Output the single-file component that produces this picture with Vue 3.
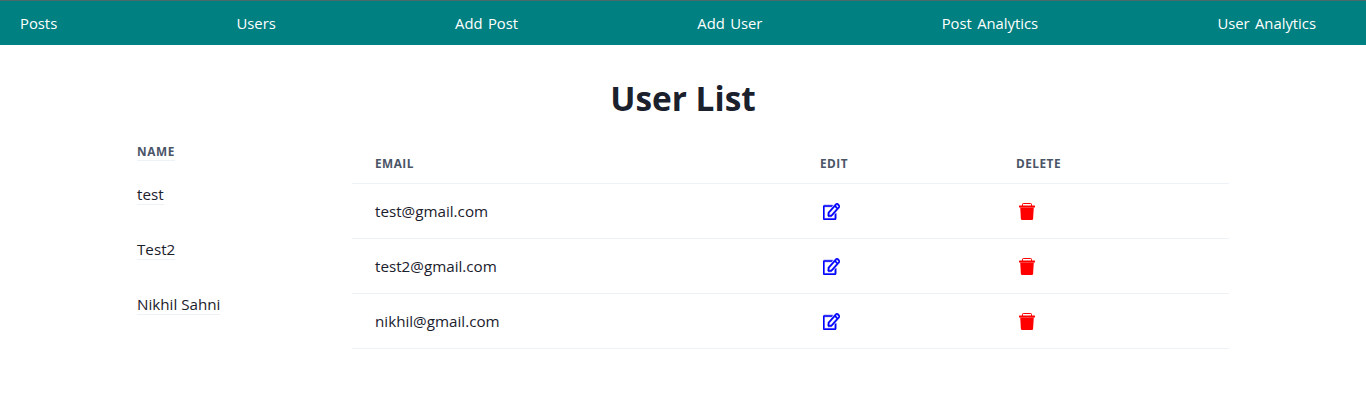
<script setup>
const links = ['Posts', 'Users', 'Add Post', 'Add User', 'Post Analytics', 'User Analytics']
const users = [
  { name: 'test', email: 'test@gmail.com' },
  { name: 'Test2', email: 'test2@gmail.com' },
  { name: 'Nikhil Sahni', email: 'nikhil@gmail.com' }
]
</script>

<template>
  <div class="page">
    <nav class="nav">
      <a v-for="l in links" :key="l" class="link">{{ l }}</a>
    </nav>
    <h1 class="title">User List</h1>
    <div class="board">
      <div class="names">
        <div class="names-head">NAME</div>
        <div v-for="u in users" :key="u.name" class="name">{{ u.name }}</div>
      </div>
      <div class="table">
        <div class="row head">
          <div>EMAIL</div>
          <div>EDIT</div>
          <div>DELETE</div>
        </div>
        <div v-for="u in users" :key="u.email" class="row body">
          <div>{{ u.email }}</div>
          <div class="icon-cell">
            <svg width="17" height="17" viewBox="0 0 576 512" preserveAspectRatio="none" fill="#0000ff" stroke="#0000ff" stroke-width="14"><path d="M402.3 344.9l32-32c5-5 13.7-1.5 13.7 5.7V464c0 26.5-21.5 48-48 48H48c-26.5 0-48-21.5-48-48V112c0-26.5 21.5-48 48-48h273.5c7.1 0 10.7 8.6 5.7 13.7l-32 32c-1.5 1.5-3.5 2.3-5.7 2.3H48v352h352V350.5c0-2.1.8-4.1 2.3-5.6zm156.6-201.8L296.3 405.7l-90.4 10c-26.2 2.9-48.5-19.2-45.6-45.6l10-90.4L432.9 17.1c22.9-22.9 59.9-22.9 82.7 0l43.2 43.2c22.9 22.9 22.9 60 .1 82.8zM460.1 174L402 115.9 216.2 301.8l-7.3 65.3 65.3-7.3L460.1 174zm64.8-79.7l-43.2-43.2c-4.1-4.1-10.8-4.1-14.8 0L436 82l58.1 58.1 30.9-30.9c4-4.2 4-10.8-.1-14.9z"/></svg>
          </div>
          <div class="icon-cell">
            <svg width="16" height="17" viewBox="0 0 16 17" fill="#ff0000"><path d="M3.5 3V1.2C3.5.8 3.8.5 4.2.5h7.6c.4 0 .7.3.7.7V3" fill="none" stroke="#ff0000"/><rect x="0" y="2.6" width="16" height="2" rx=".5"/><path d="M1.2 4.4h13.6l-.7 11.3c-.1.8-.7 1.3-1.4 1.3H3.3c-.7 0-1.3-.5-1.4-1.3z"/></svg>
          </div>
        </div>
      </div>
    </div>
  </div>
</template>

<style scoped>
.page {
  font-family: "Open Sans", "Noto Sans", sans-serif;
  color: #1a202c;
  background: #fff;
  height: 414px;
}
.nav {
  display: flex;
  justify-content: space-between;
  align-items: center;
  height: 45px;
  box-sizing: border-box;
  padding: 0 50px 0 20px;
  background: #008080;
  border-top: 1px solid #4a6a6a;
}
.link {
  color: #fff;
  font-size: 14.8px;
  word-spacing: 1.5px;
}
.title {
  margin: 29px 0 0;
  text-align: center;
  font-size: 33.4px;
  line-height: 48px;
  font-weight: 700;
}
.board {
  display: flex;
  margin: 0 137px;
}
.names {
  width: 215px;
  flex: none;
  padding-top: 21px;
  font-size: 15.2px;
  display: flex;
  flex-direction: column;
  align-items: flex-start;
}
.names-head {
  font-size: 11.8px;
  font-weight: 700;
  letter-spacing: 0.6px;
  color: #4a5568;
  line-height: 17px;
  border-bottom: 1px solid #edf2f7;
  margin-bottom: 23px;
}
.name {
  line-height: 20px;
  border-bottom: 1px solid #edf2f7;
  margin-bottom: 34px;
}
.table {
  width: 878px;
  margin-top: 24px;
  font-size: 15.2px;
}
.row {
  display: grid;
  grid-template-columns: 445px 196px 1fr;
  padding-left: 23px;
  border-bottom: 1px solid #edf2f7;
  align-items: center;
  box-sizing: border-box;
}
.head {
  height: 38px;
  padding-bottom: 4px;
  font-size: 11.8px;
  font-weight: 700;
  letter-spacing: 0.5px;
  color: #4a5568;
}
.body {
  height: 55px;
}
.icon-cell {
  display: flex;
  align-items: center;
  padding-left: 3px;
}
.icon-cell svg {
  display: block;
}
</style>
